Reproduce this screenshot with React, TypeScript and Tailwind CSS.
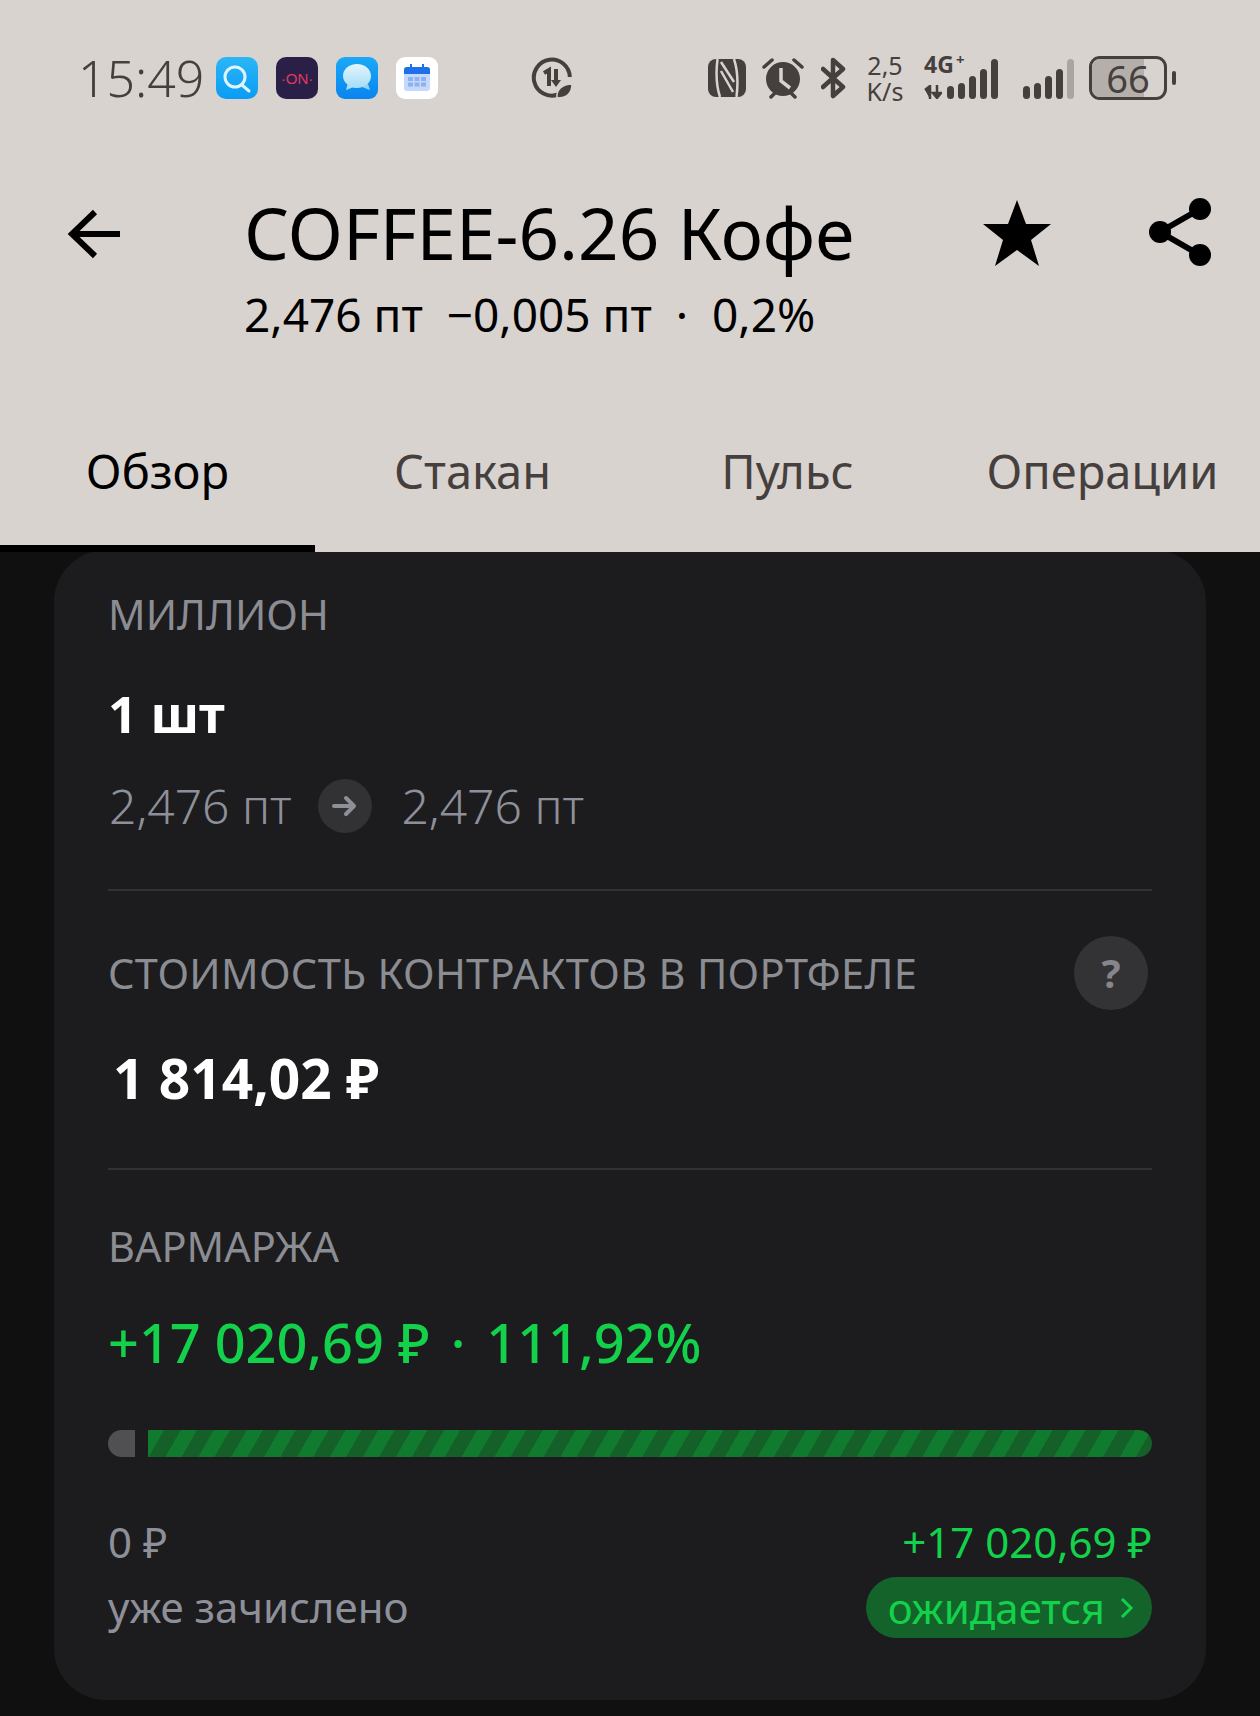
import React from 'react';

const ink = '#45403d';

function SearchApp() {
  return (
    <svg width="42" height="42" viewBox="0 0 42 42">
      <defs>
        <linearGradient id="sa" x1="0" y1="0" x2="0" y2="1">
          <stop offset="0" stopColor="#2cb6f5" />
          <stop offset="1" stopColor="#0a9cf5" />
        </linearGradient>
      </defs>
      <rect width="42" height="42" rx="10" fill="url(#sa)" />
      <circle cx="19" cy="20" r="10" fill="none" stroke="#dff4ff" strokeWidth="3" />
      <path d="M26 28l7 6" stroke="#dff4ff" strokeWidth="3" strokeLinecap="round" />
    </svg>
  );
}

function OnApp() {
  return (
    <div className="w-[42px] h-[42px] rounded-[10px] bg-[#2a1f47] flex items-center justify-center text-[#e0395f] text-[15px] leading-none font-['Liberation_Sans',sans-serif]">
      ·ON·
    </div>
  );
}

function MessageApp() {
  return (
    <svg width="42" height="42" viewBox="0 0 42 42">
      <defs>
        <linearGradient id="ma" x1="0" y1="0" x2="0" y2="1">
          <stop offset="0" stopColor="#1aa9f7" />
          <stop offset="1" stopColor="#0a84ee" />
        </linearGradient>
        <linearGradient id="mb" x1="0" y1="0" x2="0" y2="1">
          <stop offset="0" stopColor="#e3f5fd" />
          <stop offset="1" stopColor="#9fdcf7" />
        </linearGradient>
      </defs>
      <rect width="42" height="42" rx="9" fill="url(#ma)" />
      <path d="M26 30l8 3-2-6z" fill="#8fd6f6" />
      <path d="M21 7c8 0 14 5 14 12s-6 12-14 12c-1.500 0-3-.2-4.400-.6L10 33l1.500-5.400C8.700 25.400 7 22.400 7 19 7 12 13 7 21 7z" fill="url(#mb)" />
    </svg>
  );
}

function CalendarApp() {
  return (
    <svg width="42" height="42" viewBox="0 0 42 42">
      <rect width="42" height="42" rx="9" fill="#fff" />
      <rect x="8" y="10" width="26" height="24" rx="3" fill="#c4d9fb" />
      <path d="M8 17v-4a3 3 0 0 1 3-3h20a3 3 0 0 1 3 3v4z" fill="#1f6fe8" />
      <path d="M15 7v5M27 7v5" stroke="#1f6fe8" strokeWidth="2" />
      <g fill="#8fb2ee">
        <rect x="12" y="20" width="5" height="4" />
        <rect x="18.500" y="20" width="5" height="4" />
        <rect x="25" y="20" width="5" height="4" />
        <rect x="12" y="25.500" width="5" height="4" />
        <rect x="18.500" y="25.500" width="5" height="4" />
        <rect x="25" y="25.500" width="5" height="4" />
      </g>
    </svg>
  );
}

function DataSaverIcon() {
  return (
    <svg width="42" height="42" viewBox="0 0 42 42">
      <path d="M27 37.500A18 18 0 1 1 38.800 20" fill="none" stroke={ink} strokeWidth="4" />
      <path d="M13 16l5-3v16" fill="none" stroke={ink} strokeWidth="4" />
      <path d="M25 12v13" stroke={ink} strokeWidth="4" />
      <path d="M20 23h10l-5 7z" fill={ink} />
      <path d="M26 41c-1-8 5-14 15-14 0 9-5 14-15 14z" fill={ink} stroke="#d9d3d0" strokeWidth="1.500" />
    </svg>
  );
}

function NfcIcon() {
  return (
    <svg width="38" height="38" viewBox="0 0 38 38">
      <rect width="38" height="38" rx="8" fill={ink} />
      <path d="M9.500 0C8 12 8 26 12 38M28.500 38C30 26 30 12 26 0" fill="none" stroke="#d9d3d0" strokeWidth="2.500" />
      <path d="M13 3l13 20M13 12l12 21" stroke="#d9d3d0" strokeWidth="2.500" />
    </svg>
  );
}

function AlarmIcon() {
  return (
    <svg width="42" height="42" viewBox="0 0 42 42">
      <circle cx="21" cy="22" r="17" fill={ink} />
      <path d="M2 10l8-7M40 10l-8-7M9 40l4-4M33 40l-4-4" stroke={ink} strokeWidth="3.500" strokeLinecap="round" />
      <path d="M19 11v13l9 7" fill="none" stroke="#d9d3d0" strokeWidth="3.500" />
    </svg>
  );
}

function BluetoothIcon() {
  return (
    <svg width="26" height="42" viewBox="0 0 26 42">
      <path d="M2 12l20 18-10 9V3l10 9L2 30" fill="none" stroke={ink} strokeWidth="4.500" strokeLinejoin="round" strokeLinecap="round" />
    </svg>
  );
}

function Bars({ heights, dim }: { heights: number[]; dim?: boolean }) {
  return (
    <div className="flex items-end gap-[4px] h-[42px]">
      {heights.map((h, i) => (
        <div
          key={i}
          className={`w-[7px] rounded-full ${dim && i === heights.length - 1 ? 'bg-[#aaa5a1]' : 'bg-[#45403d]'}`}
          style={{ height: h }}
        />
      ))}
    </div>
  );
}

function StatusBar() {
  return (
    <div className="flex items-center h-[46px] mt-[55px] pl-[78px] font-['Noto_Sans',sans-serif] text-[#45403d]">
      <span className="text-[50px] leading-none font-light w-[138px]">15:49</span>
      <div className="flex gap-[18px]">
        <SearchApp />
        <OnApp />
        <MessageApp />
        <CalendarApp />
      </div>
      <div className="ml-[93px]">
        <DataSaverIcon />
      </div>
      <div className="ml-[135px]">
        <NfcIcon />
      </div>
      <div className="ml-[16px]">
        <AlarmIcon />
      </div>
      <div className="ml-[17px]">
        <BluetoothIcon />
      </div>
      <div className="ml-[17px] w-[42px] flex flex-col items-center text-[25px] leading-[26px]">
        <span>2,5</span>
        <span>K/s</span>
      </div>
      <div className="ml-[18px] relative w-[74px] h-[42px] flex justify-end">
        <Bars heights={[13, 16, 23, 30, 40]} />
        <span className="absolute left-0 top-[-4px] text-[23px] leading-none font-bold">4G</span>
        <span className="absolute left-[32px] top-[-5px] text-[15px] leading-none font-bold">+</span>
        <svg width="18" height="14" viewBox="0 0 18 14" className="absolute left-0 bottom-0">
          <path d="M1 5l5-4v13M13 0v12M9 8l4 5 4-5z" fill={ink} stroke={ink} strokeWidth="2.500" />
        </svg>
      </div>
      <div className="ml-[25px]">
        <Bars heights={[13, 16, 23, 30, 40]} dim />
      </div>
      <div className="ml-[15px] relative w-[78px] h-[44px] rounded-[11px] border-[3px] border-[#45403d] flex items-center justify-center">
        <div className="absolute left-0 top-0 bottom-0 w-[52px] rounded-l-[8px] bg-[#b5afab]" />
        <span className="relative text-[38px] leading-none">66</span>
      </div>
      <div className="ml-[5px] w-[4px] h-[14px] rounded-full bg-[#45403d]" />
    </div>
  );
}

function TitleBlock() {
  return (
    <div className="flex mt-[97px] font-['Noto_Sans',sans-serif] text-black">
      <div className="w-[244px] pl-[66px] pt-[8px]">
        <svg width="58" height="56" viewBox="0 0 58 56">
          <path d="M6 28h48M29 6L6 28l23 22" fill="none" stroke="#000" strokeWidth="6" />
        </svg>
      </div>
      <div className="w-[739px]">
        <div className="text-[71px] leading-[70px] whitespace-nowrap">COFFEE-6.26 Кофе</div>
        <div className="text-[46px] leading-[56px] mt-[18px] whitespace-pre">2,476 пт  −0,005 пт  ·  0,2%</div>
      </div>
      <svg width="68" height="66" viewBox="0 0 68 66" className="mt-[2px]">
        <path d="M34 0l9 24h25L48 40l8 26-22-16-22 16 8-26L0 24h25z" fill="#000" />
      </svg>
      <svg width="64" height="70" viewBox="0 0 64 70" className="ml-[97px] mt-[-1px]">
        <path d="M52 12L12 35l40 23" fill="none" stroke="#000" strokeWidth="6" />
        <circle cx="52" cy="12" r="11" fill="#000" />
        <circle cx="12" cy="35" r="11" fill="#000" />
        <circle cx="52" cy="58" r="11" fill="#000" />
      </svg>
    </div>
  );
}

function Tab({ label, active }: { label: string; active?: boolean }) {
  return (
    <div
      className={`h-[112px] pt-[1px] text-center text-[47px] leading-[60px] border-b-[7px] ${
        active ? 'text-black border-black' : 'text-[#45403d] border-transparent'
      }`}
    >
      {label}
    </div>
  );
}

function Label({ children }: { children: React.ReactNode }) {
  return <div className="text-[41.500px] leading-[50px] text-[#8b8d93]">{children}</div>;
}

function Value() {
  return <span className="text-[48px] leading-[60px] font-light text-[#8e9099]">2,476 пт</span>;
}

export default function App() {
  return (
    <div className="w-[1260px] h-[1716px] bg-[#101011] overflow-hidden font-['Noto_Sans',sans-serif]">
      <header className="relative z-10 h-[552px] bg-[#d9d3d0] flex flex-col">
        <StatusBar />
        <TitleBlock />
        <nav className="mt-auto grid grid-cols-4 font-['Noto_Sans',sans-serif]">
          <Tab label="Обзор" active />
          <Tab label="Стакан" />
          <Tab label="Пульс" />
          <Tab label="Операции" />
        </nav>
      </header>

      <main className="mx-[54px] -mt-[2px] h-[1150px] rounded-[52px] bg-[#1c1c1e] px-[54px] pt-[39px]">
        <Label>МИЛЛИОН</Label>
        <div className="mt-[44px] text-[51px] leading-[60px] font-bold text-white">1 шт</div>
        <div className="mt-[33px] pl-[1px] flex items-center">
          <Value />
          <div className="ml-[27px] mr-[29px] w-[54px] h-[54px] rounded-full bg-[#323234] flex items-center justify-center">
            <svg width="26" height="24" viewBox="0 0 26 24">
              <path d="M2 12h20M14 4l8 8-8 8" fill="none" stroke="#8e9099" strokeWidth="4" strokeLinecap="round" strokeLinejoin="round" />
            </svg>
          </div>
          <Value />
        </div>
        <div className="mt-[53px] h-[2px] bg-[#323234]" />

        <div className="mt-[45px] flex items-center justify-between pr-[4px]">
          <div className="tracking-[0.3px]">
            <Label>СТОИМОСТЬ КОНТРАКТОВ В ПОРТФЕЛЕ</Label>
          </div>
          <div className="w-[74px] h-[74px] rounded-full bg-[#333335] flex items-center justify-center text-[40px] font-bold leading-none text-[#85868c]">?</div>
        </div>
        <div className="mt-[33px] pl-[5px] text-[55px] leading-[70px] font-bold text-white">1 814,02 ₽</div>
        <div className="mt-[55px] h-[2px] bg-[#323234]" />

        <div className="mt-[51px]">
          <Label>ВАРМАРЖА</Label>
        </div>
        <div className="mt-[36px] flex text-[54px] leading-[70px] font-medium text-[#13d14b] whitespace-pre">
          <span>+17 020,69 ₽</span>
          <span className="ml-[21px]">·</span>
          <span className="ml-[21px]">111,92%</span>
        </div>

        <div className="mt-[53px] flex gap-[13px] h-[27px]">
          <div className="w-[27px] rounded-l-[14px] bg-[#505052]" />
          <div className="flex-1 rounded-r-[14px] bg-[repeating-linear-gradient(120deg,#107a2e_0px,#107a2e_14px,#155f28_14px,#155f28_28.500px)]" />
        </div>

        <div className="mt-[55px] flex justify-between">
          <div className="text-[42px] leading-[60px] text-[#8e9099]">
            <div>0 ₽</div>
            <div className="mt-[5px]">уже зачислено</div>
          </div>
          <div className="flex flex-col items-end">
            <div className="text-[42px] leading-[60px] text-[#13d14b]">+17 020,69 ₽</div>
            <div className="mt-[5px] h-[61px] rounded-full bg-[#14632a] pl-[22px] pr-[18px] flex items-center gap-[15px] text-[42px] text-[#13d14b]">
              ожидается
              <svg width="14" height="24" viewBox="0 0 14 24">
                <path d="M2 3l9 9-9 9" fill="none" stroke="#13d14b" strokeWidth="3" />
              </svg>
            </div>
          </div>
        </div>
      </main>
    </div>
  );
}
